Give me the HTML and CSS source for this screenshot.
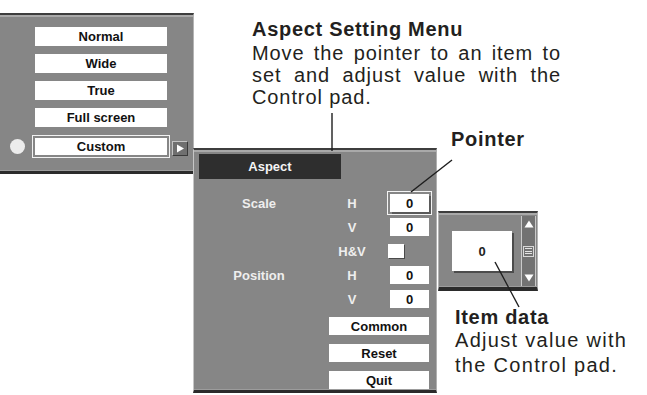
FILE: index.html
```html
<!DOCTYPE html>
<html lang="en">
  <head>
    <meta charset="UTF-8" />
    <meta name="viewport" content="width=device-width, initial-scale=1.0" />
    <title>Aspect Setting Menu</title>
    <link rel="stylesheet" href="styles.css">
  </head>
  <body>
    <div class="canvas">
      <!-- aspect list menu -->
      <div class="osd list-menu">
        <div class="list-row"><span class="slot"></span><span class="btn">Normal</span></div>
        <div class="list-row"><span class="slot"></span><span class="btn">Wide</span></div>
        <div class="list-row"><span class="slot"></span><span class="btn">True</span></div>
        <div class="list-row"><span class="slot"></span><span class="btn">Full screen</span></div>
        <div class="list-row current">
          <span class="slot"><span class="dot"></span></span>
          <span class="btn selected">Custom</span>
          <span class="arrow-btn">
            <svg width="9" height="9" viewBox="0 0 9 9"><polygon points="1,0.5 8,4.5 1,8.5" fill="#fff"/></svg>
          </span>
        </div>
      </div>

      <!-- aspect custom setting -->
      <div class="osd aspect-menu">
        <div class="aspect-title">Aspect</div>
        <div class="setting-rows">
          <div class="setting-row">
            <span class="name">Scale</span><span class="axis">H</span><span class="value pointer">0</span>
          </div>
          <div class="setting-row">
            <span class="name"></span><span class="axis">V</span><span class="value">0</span>
          </div>
          <div class="setting-row">
            <span class="name"></span><span class="axis">H&amp;V</span><span class="check"></span>
          </div>
          <div class="setting-row">
            <span class="name">Position</span><span class="axis">H</span><span class="value">0</span>
          </div>
          <div class="setting-row">
            <span class="name"></span><span class="axis">V</span><span class="value">0</span>
          </div>
        </div>
        <div class="actions">
          <span class="btn">Common</span>
          <span class="btn">Reset</span>
          <span class="btn">Quit</span>
        </div>
      </div>

      <!-- item data box -->
      <div class="osd item-box">
        <div class="item-well"><span class="item-value">0</span></div>
        <div class="scroller">
          <svg width="10" height="8" viewBox="0 0 10 8"><polygon points="5,0.5 9.5,7.5 0.5,7.5" fill="#fff"/></svg>
          <span class="grip"><i></i><i></i><i></i></span>
          <svg width="10" height="8" viewBox="0 0 10 8"><polygon points="0.5,0.5 9.5,0.5 5,7.5" fill="#fff"/></svg>
        </div>
      </div>

      <!-- callouts -->
      <div class="note note-menu">
        <h3>Aspect Setting Menu</h3>
        <p class="justified">Move the pointer to an item to</p>
        <p class="justified">set and adjust value with the</p>
        <p>Control pad.</p>
      </div>
      <div class="note note-pointer">
        <h3>Pointer</h3>
      </div>
      <div class="note note-item">
        <h3>Item data</h3>
        <p>Adjust value with<br>the Control pad.</p>
      </div>

      <svg class="leaders" width="647" height="395" viewBox="0 0 647 395">
        <line x1="332" y1="113" x2="332" y2="151" />
        <line x1="452" y1="160" x2="411" y2="192" />
        <line x1="495" y1="262" x2="519" y2="307" />
      </svg>
    </div>
  </body>
</html>
```

FILE: styles.css
```css
body {
  margin: 0;
  background: #fff;
  font-family: "Liberation Sans", Arial, sans-serif;
}
.canvas {
  position: relative;
  width: 647px;
  height: 395px;
  overflow: hidden;
}

/* on-screen display panels */
.osd {
  position: absolute;
  box-sizing: border-box;
  background: #868686;
  border-top: 2px solid #3d3d3d;
  border-bottom: 3px solid #2b2b2b;
  box-shadow: inset 0 2px 0 #a9a9a9, inset 0 -1px 0 #9c9c9c;
}
.btn {
  box-sizing: border-box;
  display: flex;
  align-items: center;
  justify-content: center;
  background: #fff;
  color: #111;
  font-size: 13px;
  font-weight: bold;
}

.list-menu {
  left: 0;
  top: 13px;
  width: 194px;
  height: 161px;
  border-right: 1px solid #b4b4b4;
  padding-top: 12px;
  display: flex;
  flex-direction: column;
  gap: 8px;
  z-index: 1;
}
.list-row {
  display: flex;
  align-items: center;
}
.list-row .slot {
  width: 35px;
  display: flex;
  align-items: center;
}
.list-row .btn {
  width: 132px;
  height: 19px;
}
.list-row.current {
  margin-top: 2px;
}
.list-row .btn.selected {
  height: 17px;
  outline: 1px solid #f2f2f2;
  outline-offset: 2px;
}
.dot {
  width: 15px;
  height: 15px;
  margin-left: 10px;
  border-radius: 50%;
  background: #ececec;
}
.arrow-btn {
  box-sizing: border-box;
  width: 16px;
  height: 15px;
  margin-left: 5px;
  margin-top: 4px;
  background: #6f6f6f;
  border-top: 1px solid #c4c4c4;
  border-left: 1px solid #c4c4c4;
  border-bottom: 1px solid #3a3a3a;
  border-right: 1px solid #3a3a3a;
  display: flex;
  align-items: center;
  justify-content: center;
}

.aspect-menu {
  left: 193px;
  top: 148px;
  width: 244px;
  height: 245px;
  border-left: 1px solid #c6c6c6;
  border-right: 1px solid #b0b0b0;
  padding: 4px 0 0 5px;
  z-index: 2;
}
.aspect-title {
  width: 142px;
  height: 25px;
  background: #2e2e2e;
  color: #f4f4f4;
  font-size: 13px;
  font-weight: bold;
  display: flex;
  align-items: center;
  justify-content: center;
}
.setting-rows {
  margin-top: 12px;
  margin-left: -5px;
}
.setting-row {
  display: grid;
  grid-template-columns: 130px 56px auto;
  align-items: center;
  height: 24px;
  color: #eeeeee;
  font-size: 13px;
  font-weight: bold;
}
.setting-row .name,
.setting-row .axis {
  text-align: center;
}
.value {
  box-sizing: border-box;
  width: 39px;
  height: 18px;
  margin-left: 10px;
  background: #fff;
  color: #111;
  display: flex;
  align-items: center;
  justify-content: center;
}
.value.pointer {
  outline: 1px solid #f4f4f4;
  outline-offset: 2px;
  box-shadow: 2px 2px 0 #5a5a5a;
}
.check {
  width: 16px;
  height: 14px;
  margin-left: 8px;
  background: #fff;
  box-shadow: 1px 1px 0 #4a4a4a;
}
.actions {
  margin: 6px 0 0 130px;
  display: flex;
  flex-direction: column;
  gap: 9px;
}
.actions .btn {
  width: 100px;
  height: 18px;
}

.item-box {
  left: 438px;
  top: 211px;
  width: 100px;
  height: 80px;
  border-left: 1px solid #b4b4b4;
  border-right: 1px solid #b4b4b4;
  border-bottom-width: 4px;
  display: flex;
  padding: 3px 1px 0 13px;
  gap: 9px;
}
.item-well {
  margin-top: 15px;
  width: 61px;
  height: 40px;
  background: #fff;
  box-shadow: 2px 2px 0 #4c4c4c;
  display: flex;
  align-items: center;
  justify-content: center;
}
.item-value {
  font-size: 13px;
  font-weight: bold;
  color: #222;
}
.scroller {
  box-sizing: border-box;
  width: 15px;
  height: 70px;
  border-left: 1px solid #cacaca;
  border-right: 1px solid #cacaca;
  background: #727272;
  display: flex;
  flex-direction: column;
  align-items: center;
  justify-content: space-between;
  padding: 4px 0 4px;
}
.grip {
  box-sizing: border-box;
  width: 11px;
  height: 11px;
  border: 1px solid #d8d8d8;
  display: flex;
  flex-direction: column;
  justify-content: space-evenly;
  padding: 0 1px;
}
.grip i {
  display: block;
  height: 1px;
  background: #e4e4e4;
}

/* callout notes */
.note {
  position: absolute;
  color: #231f20;
  font-size: 20px;
  letter-spacing: 0.9px;
  line-height: 22px;
}
.note h3 {
  margin: 0;
  font-size: 20px;
  font-weight: bold;
  letter-spacing: 0.7px;
}
.note p {
  margin: 0;
}
.note .justified {
  text-align: justify;
  text-align-last: justify;
}
.note-menu {
  left: 252px;
  top: 18px;
  width: 309px;
}
.note-menu h3 {
  margin-bottom: 2px;
}
.note-pointer {
  left: 451px;
  top: 128px;
}
.note-item {
  left: 455px;
  top: 306px;
  line-height: 25px;
  letter-spacing: 1.3px;
}
.note-item h3 {
  line-height: 22px;
}

.leaders {
  position: absolute;
  left: 0;
  top: 0;
  z-index: 3;
  pointer-events: none;
}
.leaders line {
  stroke: #1e1e1e;
  stroke-width: 1.4;
}
```
